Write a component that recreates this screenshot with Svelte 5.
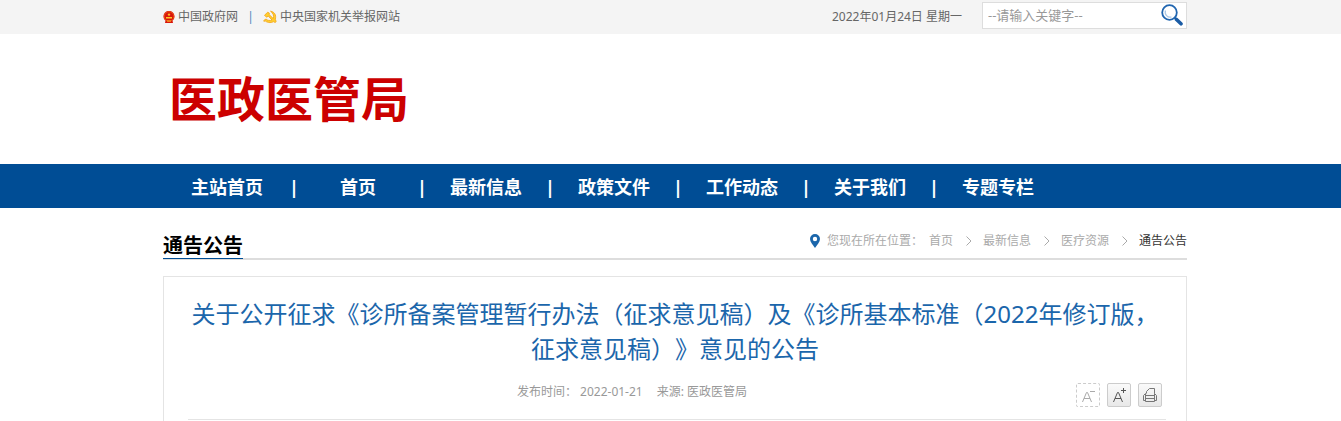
<script lang="ts">
    const nav = ['主站首页', '首页', '最新信息', '政策文件', '工作动态', '关于我们', '专题专栏'];
    const crumbs = ['首页', '最新信息', '医疗资源'];

    let keyword = $state('');
</script>

<div class="topbar">
    <div class="wrap">
        <div class="sites">
            <a href="#gov">
                <svg width="12" height="14" viewBox="0 0 12 14">
                    <path d="M6 1C9 1 11.500 3 11.500 6.500C11.500 8.500 10.500 10 9.500 10.500L10 13H2L2.500 10.500C1 9.500 .5 8 .5 6.500C.5 3 3 1 6 1Z" fill="#d8160c" />
                    <circle cx="6" cy="6.500" r="4.800" fill="none" stroke="#ee5a14" stroke-width=".8" />
                    <path d="M6 2.800L6.500 4H7.600L6.800 4.800L7.100 6L6 5.300L4.900 6L5.200 4.800L4.400 4H5.500ZM3 7H9V8.600H3ZM4 10.500H8V11.500H4Z" fill="#ffc928" />
                </svg>
                中国政府网
            </a>
            <span class="bar">|</span>
            <a href="#report">
                <svg width="14" height="14" viewBox="0 0 14 14">
                    <path d="M7.500 1.200C11.500 1.800 13.500 5 12.300 9.300L13.200 11.600L12 12.600L10.800 11.600C7.500 13.400 3.500 12.500 2 10.600L1.200 11.600L.8 10.400L3 9C4.500 10.500 7 11 9 10L5.200 6L3.600 7.300L1.500 5.200L4.800 2.200L6.400 3.200L6 4.400L10.300 8.600C11.200 5.500 10 3 7.500 1.200Z" fill="#ffcf2e" stroke="#f2a112" stroke-width=".8" />
                </svg>
                中央国家机关举报网站
            </a>
        </div>
        <span class="date">2022年01月24日 星期一</span>
        <form class="search" onsubmit={event => event.preventDefault()}>
            <input type="text" aria-label="请输入关键字" placeholder="--请输入关键字--" bind:value={keyword} />
            <button type="submit" aria-label="搜索">
                <svg width="22" height="22" viewBox="0 0 22 22" fill="none">
                    <circle cx="8.500" cy="8.500" r="7.300" stroke="#2166b0" stroke-width="1.800" />
                    <path d="M4.500 6.500A5 5 0 0 0 10.500 13" stroke="#a9c6e4" stroke-width="1.200" />
                    <path d="M13.500 13.500L16 16" stroke="#2166b0" stroke-width="2" />
                    <path d="M15.500 15.500L20 19.800" stroke="#1b5ca5" stroke-width="3.600" stroke-linecap="round" />
                </svg>
            </button>
        </form>
    </div>
</div>

<header>
    <div class="wrap">
        <h1>医政医管局</h1>
    </div>
</header>

<nav>
    <div class="wrap">
        {#each nav as item, i}
            {#if i > 0}<span class="sep">|</span>{/if}
            <a href="#nav-{i}" class:first={i == 0}>{item}</a>
        {/each}
    </div>
</nav>

<main class="wrap">
    <div class="section">
        <h2>通告公告</h2>
        <div class="crumbs">
            <svg width="10" height="14" viewBox="0 0 10 14">
                <path fill-rule="evenodd" d="M5 0A5 5 0 0 1 10 5C10 8 7 11 5 14C3 11 0 8 0 5A5 5 0 0 1 5 0ZM5 2.800A2.200 2.200 0 0 0 5 7.200A2.200 2.200 0 0 0 5 2.800Z" fill="#1b66ab" />
            </svg>
            <span class="label">您现在所在位置：</span>
            {#each crumbs as crumb, i}
                <a href="#crumb-{i}">{crumb}</a>
                <svg class="arrow" width="6" height="10" viewBox="0 0 6 10">
                    <path d="M.5 .5L5 5L.5 9.500" fill="none" stroke="#aaa" />
                </svg>
            {/each}
            <a href="#current" class="current">通告公告</a>
        </div>
    </div>

    <article>
        <h3>关于公开征求《诊所备案管理暂行办法（征求意见稿）及《诊所基本标准（2022年修订版，征求意见稿）》意见的公告</h3>
        <div class="info">
            <p>
                <span>发布时间： 2022-01-21</span>
                <span>来源: 医政医管局</span>
            </p>
            <div class="tools">
                <button class="off" aria-label="缩小字体">
                    <svg width="22" height="22" viewBox="0 0 22 22" fill="none" stroke="#aaa">
                        <path d="M5.500 18L9.500 8.500H10.500L14.500 18M7 14.500H13M13 7.500H18" />
                    </svg>
                </button>
                <button aria-label="放大字体">
                    <svg width="22" height="22" viewBox="0 0 22 22" fill="none" stroke="#555">
                        <path d="M5.500 18L9.500 8.500H10.500L14.500 18M7 14.500H13M13 6.500H18M15.500 4V9" />
                    </svg>
                </button>
                <button aria-label="打印">
                    <svg width="22" height="22" viewBox="0 0 22 22" fill="none" stroke="#777">
                        <path d="M7.500 9.500V7.500L10.500 4.500H15.500V9.500M6.500 9.500L4.500 11.500V16.500H6.500M15.500 9.500L17.500 11.500V16.500H15.500M6.500 9.500V17.500H15.500V9.500M6.500 11.500H15.500M6.500 14.500H15.500" />
                    </svg>
                </button>
            </div>
        </div>
    </article>
</main>

<style>
    :global(body) {
        background-color: #fff;
        font-family: "Noto Sans", "Noto Sans CJK SC", sans-serif;
        font-size: 12px;
        line-height: 20px;
        color: #666;
    }

    .wrap {
        max-width: 1024px;
        margin: 0 auto;
        padding-left: 9px;
    }

    a {
        color: inherit;
        text-decoration: none;
    }

    h1, h2, h3, p {
        margin: 0;
    }

    svg {
        display: block;
        flex-shrink: 0;
    }

    .topbar {
        background-color: #f4f4f4;
    }

    .topbar .wrap {
        display: flex;
        align-items: center;
        height: 34px;
    }

    .sites {
        display: flex;
        align-items: center;
        flex: 1;
    }

    .sites a {
        display: flex;
        align-items: center;
        gap: 3px;
    }

    .bar {
        width: 25px;
        text-align: center;
        color: #4a86bd;
    }

    .date {
        margin-right: 20px;
    }

    .search {
        display: flex;
        align-items: center;
        box-sizing: border-box;
        width: 205px;
        height: 27px;
        margin-bottom: 4px;
        padding: 0 3px 0 5px;
        border: 1px solid #ddd;
        background-color: #fff;
    }

    .search input {
        flex: 1;
        min-width: 0;
        padding: 0;
        border: none;
        outline: none;
        background-color: transparent;
        font-family: inherit;
        font-size: 13px;
        line-height: 20px;
        color: #666;
    }

    .search input::placeholder {
        color: #999;
        opacity: 1;
    }

    button {
        padding: 0;
        border: none;
        background-color: transparent;
        cursor: pointer;
    }

    header .wrap {
        display: flex;
        align-items: center;
        height: 130px;
    }

    h1 {
        padding-left: 6px;
        font-size: 48px;
        line-height: 64px;
        font-weight: 700;
        color: #c00;
    }

    nav {
        background-color: #004d95;
    }

    nav .wrap {
        display: flex;
        padding-top: 2px;
        font-size: 18px;
        line-height: 42px;
        font-weight: 700;
        color: #fff;
    }

    nav a {
        width: 122px;
        text-align: center;
    }

    nav a.first {
        width: 128px;
    }

    .sep {
        display: flex;
        justify-content: center;
        width: 6px;
    }

    .section {
        display: flex;
        justify-content: space-between;
        align-items: flex-start;
        height: 50px;
        border-bottom: 2px solid #ddd;
    }

    h2 {
        padding-top: 26px;
        border-bottom: 1px solid #004d95;
        font-size: 20px;
        line-height: 24px;
        font-weight: 700;
        color: #000;
    }

    .crumbs {
        display: flex;
        align-items: center;
        padding-top: 23px;
        color: #aaa;
    }

    .label {
        margin: 0 6px 0 7px;
    }

    .arrow {
        margin: 0 11px 0 13px;
    }

    .current {
        color: #333;
    }

    article {
        margin-top: 16px;
        padding: 19px 20px 24px 24px;
        border: 1px solid #e4e4e4;
        border-bottom: none;
    }

    h3 {
        padding-right: 4px;
        font-size: 24px;
        line-height: 35px;
        font-weight: 400;
        text-align: center;
        text-spacing-trim: space-all;
        color: #1b66ab;
    }

    .info {
        display: flex;
        align-items: flex-start;
        padding: 17px 4px 12px 0;
        border-bottom: 1px solid #e4e4e4;
        color: #999;
    }

    .info p {
        display: flex;
        flex: 1;
        justify-content: center;
        gap: 14px;
        line-height: 18px;
    }

    .tools {
        display: flex;
        gap: 7px;
    }

    .tools button {
        box-sizing: border-box;
        width: 24px;
        height: 24px;
        border: 1px solid #ccc;
        border-radius: 2px;
        background: linear-gradient(#fafafa, #e8e8e8);
    }

    .tools button.off {
        border-style: dashed;
        background: none;
    }
</style>
